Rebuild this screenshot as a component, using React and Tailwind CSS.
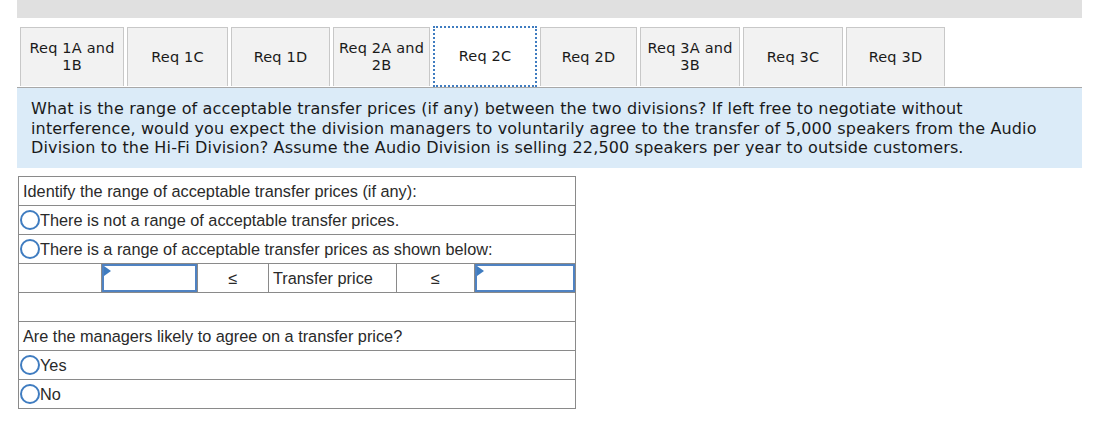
import React from 'react';

const tabs = [
    { label: ['Req 1A and', '1B'], w: 'w-[104px]' },
    { label: ['Req 1C'], w: 'w-[101px]' },
    { label: ['Req 1D'], w: 'w-[99px]' },
    { label: ['Req 2A and', '2B'], w: 'w-[97px]' },
    { label: ['Req 2C'], w: 'w-[104px]', active: true },
    { label: ['Req 2D'], w: 'w-[97px]' },
    { label: ['Req 3A and', '3B'], w: 'w-[100px]' },
    { label: ['Req 3C'], w: 'w-[100px]' },
    { label: ['Req 3D'], w: 'w-[99px]' },
];

const Radio = () => (
    <span className="inline-block h-[20px] w-[20px] shrink-0 rounded-full border-2 border-[#3f7cc0] bg-white" />
);

const PriceInput = () => (
    <div className="relative h-full w-full border-2 border-[#4f82c2] bg-white">
        <span className="absolute left-0 top-0 h-0 w-0 border-y-[5px] border-l-[7px] border-y-transparent border-l-[#3f7cc0]" />
    </div>
);

function Row({ children, className = '' }) {
    return (
        <div className={'flex h-[29px] items-center border-b border-[#8a8a8a] last:h-[28px] last:border-b-0 ' + className}>
            {children}
        </div>
    );
}

export default function App() {
    return (
        <div className="h-[421px] w-[1109px] bg-white pl-[17px]" style={{ fontFamily: '"DejaVu Sans", Verdana, sans-serif' }}>
            <div className="h-[18px] w-[1065px] bg-[#e0e0e0]" />

            <div className="mt-[9px] flex gap-[3px] pl-[3px]">
                {tabs.map((t, i) => (
                    <div
                        key={i}
                        className={
                            'flex flex-col items-center justify-center text-center text-[14.5px] leading-[17px] tracking-[0.2px] text-[#1a1a1a] ' +
                            t.w +
                            (t.active
                                ? ' -mt-[1px] h-[61px] border-2 border-dotted border-[#3f7cc0] bg-white'
                                : ' h-[59px] border border-b-0 border-[#c8c8c8] bg-[#f2f2f2]')
                        }
                    >
                        {t.label.map((l, j) => (
                            <span key={j}>{l}</span>
                        ))}
                    </div>
                ))}
            </div>

            <div className="h-[81px] w-[1065px] border-t border-[#a8a8a8] bg-[#dbebf8] pl-[14px] pt-[11px] text-[16px] leading-[19.5px] tracking-[0.15px] text-[#1a1a1a]">
                What is the range of acceptable transfer prices (if any) between the two divisions? If left free to negotiate without
                <br />
                interference, would you expect the division managers to voluntarily agree to the transfer of 5,000 speakers from the Audio
                <br />
                Division to the Hi-Fi Division? Assume the Audio Division is selling 22,500 speakers per year to outside customers.
            </div>

            <div
                className="ml-[1px] mt-[8px] w-[558px] border border-[#8a8a8a] text-[16.3px] text-[#2a2a2a]"
                style={{ fontFamily: '"Liberation Sans", Arial, sans-serif' }}
            >
                <Row className="pl-[4px]">Identify the range of acceptable transfer prices (if any):</Row>
                <Row className="pl-[1px]">
                    <Radio />
                    <span>There is not a range of acceptable transfer prices.</span>
                </Row>
                <Row className="pl-[1px]">
                    <Radio />
                    <span>There is a range of acceptable transfer prices as shown below:</span>
                </Row>
                <Row className="items-stretch">
                    <div className="w-[83px] border-r border-[#8a8a8a]" />
                    <div className="w-[95px]">
                        <PriceInput />
                    </div>
                    <div className="flex w-[72px] items-center justify-center border-x border-[#8a8a8a]">≤</div>
                    <div className="flex w-[127px] items-center pl-[4px]">Transfer price</div>
                    <div className="flex w-[79px] items-center justify-center border-x border-[#8a8a8a]">≤</div>
                    <div className="flex-1">
                        <PriceInput />
                    </div>
                </Row>
                <Row />
                <Row className="pl-[4px]">Are the managers likely to agree on a transfer price?</Row>
                <Row className="pl-[1px]">
                    <Radio />
                    <span>Yes</span>
                </Row>
                <Row className="pl-[1px]">
                    <Radio />
                    <span>No</span>
                </Row>
            </div>
        </div>
    );
}
